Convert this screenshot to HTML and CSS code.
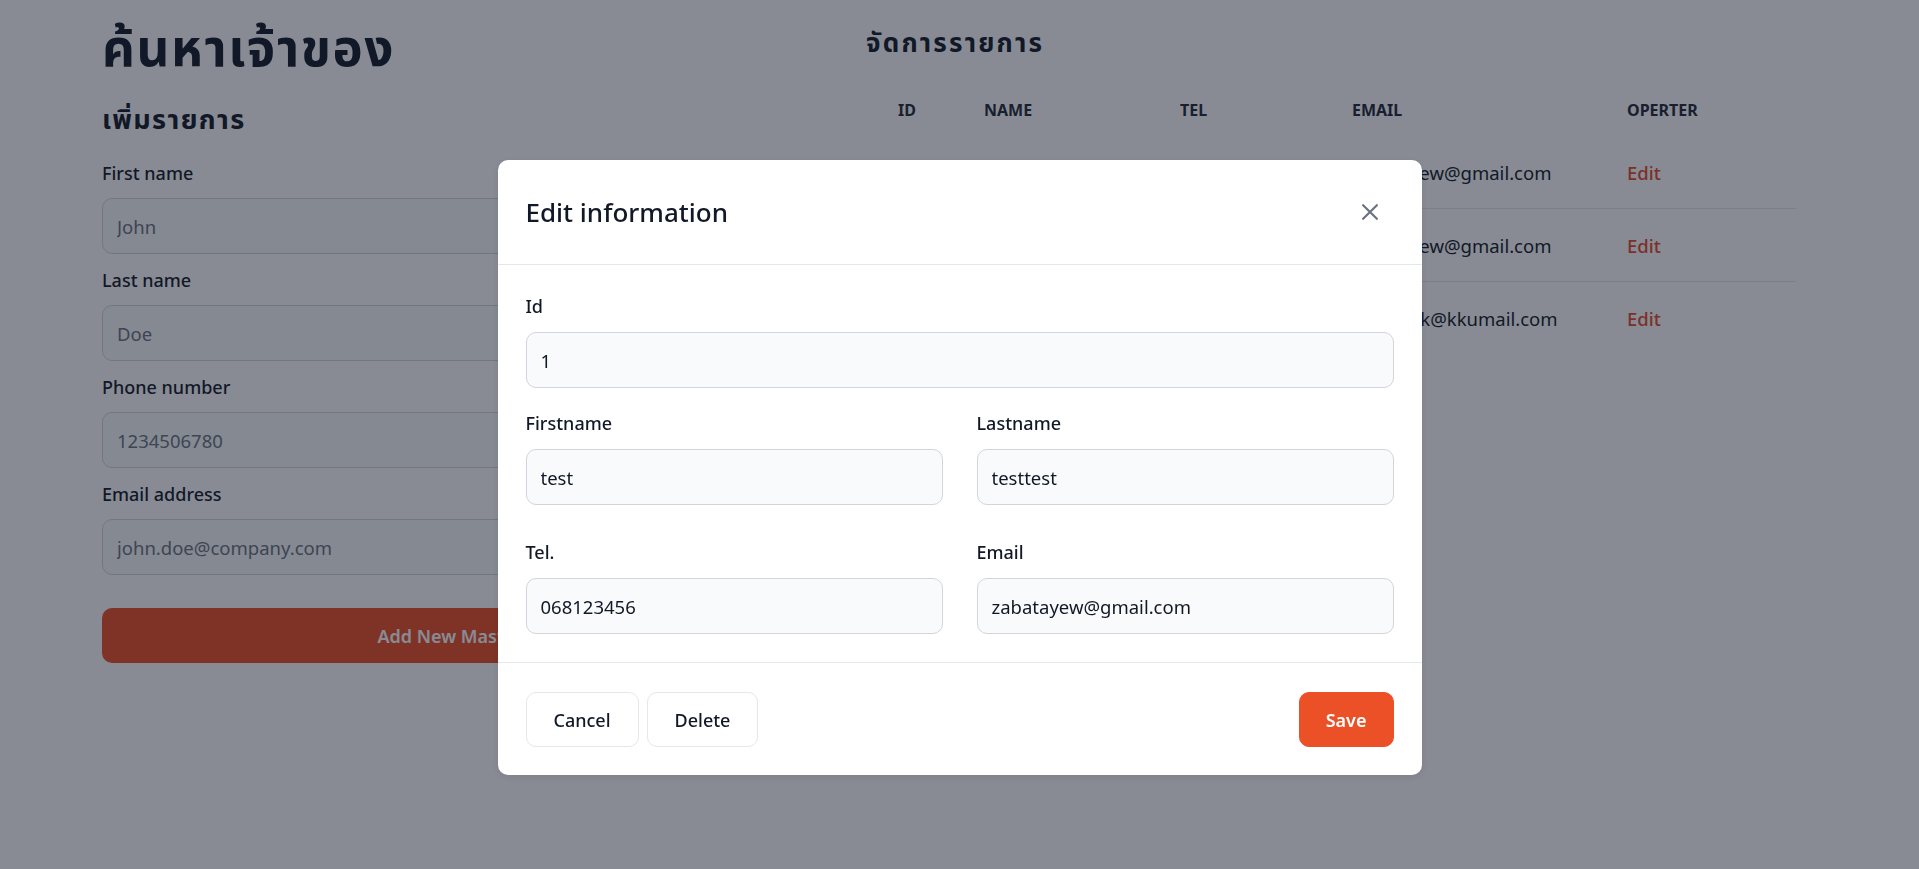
FILE: index.html
```html
<!DOCTYPE html>
<html lang="th">
<head>
<meta charset="utf-8">
<title>ค้นหาเจ้าของ</title>
<link rel="stylesheet" href="styles.css">
</head>
<body>
<div class="page">
  <section class="add">
    <h1 class="title">ค้นหาเจ้าของ</h1>
    <h2 class="subtitle">เพิ่มรายการ</h2>
    <form class="add-form">
      <div class="field">
        <label class="label">First name</label>
        <input class="input" type="text" placeholder="John">
      </div>
      <div class="field">
        <label class="label">Last name</label>
        <input class="input" type="text" placeholder="Doe">
      </div>
      <div class="field">
        <label class="label">Phone number</label>
        <input class="input" type="text" placeholder="1234506780">
      </div>
      <div class="field">
        <label class="label">Email address</label>
        <input class="input" type="text" placeholder="john.doe@company.com">
      </div>
      <button class="add-btn" type="button">Add New Master</button>
    </form>
  </section>
  <section class="list">
    <h2 class="list-title">จัดการรายการ</h2>
    <table class="table">
      <thead>
        <tr>
          <th class="c-id">ID</th>
          <th class="c-name">NAME</th>
          <th class="c-tel">TEL</th>
          <th class="c-email">EMAIL</th>
          <th class="c-op">OPERTER</th>
        </tr>
      </thead>
      <tbody>
        <tr>
          <td>1</td>
          <td>test testtest</td>
          <td>068123456</td>
          <td>zabatayew@gmail.com</td>
          <td><a class="edit" href="#">Edit</a></td>
        </tr>
        <tr>
          <td>2</td>
          <td>zaba tayew</td>
          <td>0812345678</td>
          <td>zabatayew@gmail.com</td>
          <td><a class="edit" href="#">Edit</a></td>
        </tr>
        <tr>
          <td>3</td>
          <td>supakit k</td>
          <td>0898765432</td>
          <td>supakit.k@kkumail.com</td>
          <td><a class="edit" href="#">Edit</a></td>
        </tr>
      </tbody>
    </table>
  </section>
</div>

<div class="backdrop">
  <div class="modal">
    <div class="modal-head">
      <h3 class="modal-title">Edit information</h3>
      <button class="close" type="button" aria-label="Close">
        <svg width="16" height="16" viewBox="0 0 14 14" fill="none"><path d="M1 1l12 12M13 1L1 13" stroke="#6b7280" stroke-width="1.9" stroke-linecap="round"/></svg>
      </button>
    </div>
    <div class="modal-body">
      <div class="m-field m-id">
        <label class="m-label">Id</label>
        <input class="m-input" type="text" value="1">
      </div>
      <div class="m-grid">
        <div class="m-field">
          <label class="m-label">Firstname</label>
          <input class="m-input" type="text" value="test">
        </div>
        <div class="m-field">
          <label class="m-label">Lastname</label>
          <input class="m-input" type="text" value="testtest">
        </div>
        <div class="m-field">
          <label class="m-label">Tel.</label>
          <input class="m-input" type="text" value="068123456">
        </div>
        <div class="m-field">
          <label class="m-label">Email</label>
          <input class="m-input" type="text" value="zabatayew@gmail.com">
        </div>
      </div>
    </div>
    <div class="modal-foot">
      <button class="btn" type="button">Cancel</button>
      <button class="btn" type="button">Delete</button>
      <button class="btn btn-save" type="button">Save</button>
    </div>
  </div>
</div>
</body>
</html>
```

FILE: styles.css
```css
* { box-sizing: border-box; }

body {
  margin: 0;
  background: #ffffff;
  color: #111827;
  font-family: "Noto Sans", "Noto Sans Thai", "Leelawadee UI", Tahoma, sans-serif;
}

.page {
  display: flex;
  gap: 68px;
  padding-left: 102px;
}

/* left column */
.add {
  width: 696px;
  flex: none;
}

.title {
  margin: 0;
  padding-top: 17px;
  font-size: 51px;
  line-height: 58px;
  font-weight: 700;
  letter-spacing: 1.6px;
}

.subtitle {
  margin: 26px 0 0;
  font-size: 27px;
  line-height: 36px;
  font-weight: 700;
  letter-spacing: 1.4px;
}

.add-form {
  margin-top: 24px;
}

.field {
  margin-bottom: 14px;
}

.label {
  display: block;
  font-size: 18px;
  line-height: 25px;
  font-weight: 500;
  margin-bottom: 12px;
}

.input {
  display: block;
  width: 100%;
  height: 56px;
  padding: 0 14px;
  border: 1px solid #d1d5db;
  border-radius: 10px;
  background: #f9fafb;
  font-family: inherit;
  font-size: 18.5px;
  color: #111827;
}

.input::placeholder { color: #6b7280; }

.add-btn {
  display: block;
  width: 100%;
  height: 55px;
  margin-top: 33px;
  border: 0;
  border-radius: 10px;
  background: #ec4f27;
  color: #ffffff;
  font-family: inherit;
  font-size: 18px;
  font-weight: 600;
}

/* right column */
.list {
  width: 930px;
  flex: none;
}

.list-title {
  margin: 0;
  padding-top: 25px;
  font-size: 26px;
  line-height: 34px;
  font-weight: 700;
  letter-spacing: 2.2px;
}

.table {
  margin-top: 25px;
  width: 100%;
  border-collapse: collapse;
  text-align: left;
}

.table th {
  padding: 15px 0 15px 32px;
  font-size: 16px;
  line-height: 22px;
  font-weight: 700;
  text-transform: uppercase;
  color: #1f2937;
}

.c-id { width: 86px; }
.c-name { width: 196px; }
.c-tel { width: 172px; }
.c-email { width: 275px; }

.table td {
  padding: 24px 0 23px 32px;
  font-size: 18.5px;
  line-height: 25px;
  white-space: nowrap;
}

.table tbody tr { border-bottom: 1px solid #e5e7eb; }
.table tbody tr:last-child { border-bottom: 0; }

.edit {
  color: #e5482a;
  font-weight: 500;
  text-decoration: none;
}

/* modal */
.backdrop {
  position: fixed;
  inset: 0;
  background: rgba(17, 24, 39, 0.5);
  display: flex;
  justify-content: center;
  align-items: flex-start;
  padding-top: 160px;
}

.modal {
  width: 924px;
  background: #ffffff;
  border-radius: 10px;
  box-shadow: 0 2px 6px rgba(0, 0, 0, 0.08);
}

.modal-head {
  height: 105px;
  display: flex;
  align-items: center;
  justify-content: space-between;
  padding: 0 28px;
  border-bottom: 1px solid #e5e7eb;
}

.modal-title {
  margin: 0;
  font-size: 26px;
  font-weight: 500;
  color: #111827;
}

.close {
  width: 40px;
  height: 40px;
  margin-right: 4px;
  border: 0;
  background: transparent;
  display: flex;
  align-items: center;
  justify-content: center;
  padding: 0;
}

.modal-body {
  padding: 29px 28px 28px;
}

.m-id { margin-bottom: 23px; }

.m-grid {
  display: grid;
  grid-template-columns: 1fr 1fr;
  column-gap: 34px;
  row-gap: 35px;
}

.m-label {
  display: block;
  font-size: 18px;
  line-height: 25px;
  font-weight: 500;
  margin-bottom: 13px;
}

.m-input {
  display: block;
  width: 100%;
  height: 56px;
  padding: 0 14px;
  border: 1px solid #d1d5db;
  border-radius: 10px;
  background: #f9fafb;
  font-family: inherit;
  font-size: 18.5px;
  color: #111827;
}

.modal-foot {
  display: flex;
  gap: 8px;
  padding: 29px 28px 28px;
  border-top: 1px solid #e5e7eb;
}

.btn {
  height: 55px;
  padding: 0 27px;
  border: 1px solid #e5e7eb;
  border-radius: 10px;
  background: #ffffff;
  color: #111827;
  font-family: inherit;
  font-size: 18px;
  font-weight: 500;
}

.btn-save {
  margin-left: auto;
  border-color: #eb5027;
  background: #eb5027;
  color: #ffffff;
  font-weight: 600;
  padding: 0 26px;
}
```
